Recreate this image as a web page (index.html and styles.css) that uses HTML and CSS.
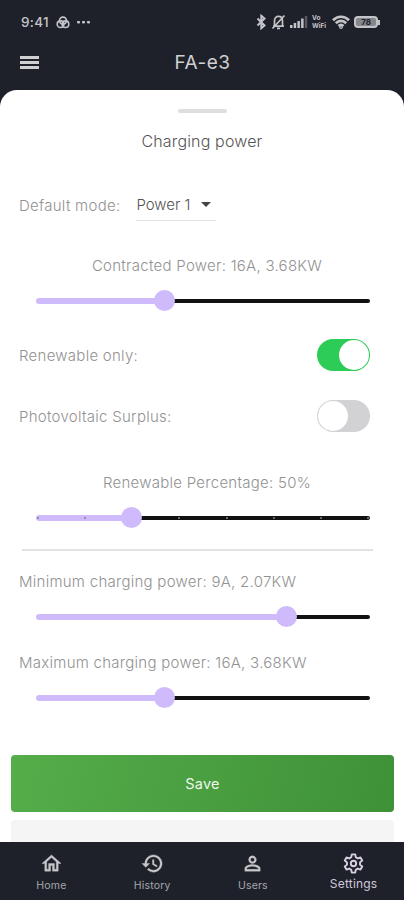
FILE: index.html
```html
<!DOCTYPE html>
<html lang="en">
<head>
  <meta charset="UTF-8" />
  <meta name="viewport" content="width=device-width, initial-scale=1.0" />
  <title>FA-e3</title>
  <link rel="stylesheet" href="styles.css">
</head>
<body>

  <div class="app">
    <div class="status-bar">
      <div class="status-left">
        <span class="time">9:41</span>
        <svg width="14" height="13" viewBox="0 0 14 13" fill="none" stroke="currentColor" stroke-width="1.6">
          <circle cx="7" cy="4.6" r="3.5" />
          <circle cx="4.5" cy="8.2" r="3.3" />
          <circle cx="9.5" cy="8.2" r="3.3" />
        </svg>
        <svg width="13" height="3" viewBox="0 0 13 3" fill="currentColor">
          <rect width="3" height="2.4" rx="0.8" />
          <rect x="5" width="3" height="2.4" rx="0.8" />
          <rect x="10" width="3" height="2.4" rx="0.8" />
        </svg>
      </div>
      <div class="status-right">
        <svg width="11" height="16" viewBox="0 0 11 16" fill="none" stroke="currentColor" stroke-width="2">
          <path d="M1.500 4.500l7 7L5.300 14.200V1.800l3.200 2.700-7 7" />
        </svg>
        <svg width="15" height="16" viewBox="0 0 15 16" fill="none" stroke="currentColor" stroke-width="1.7">
          <path d="M2 12.200h11M3.500 12V7c0-3 1.800-4.600 4-4.600s4 1.600 4 4.600v5M6 14.300h3M1.500 14.500L13.500 1.500" />
        </svg>
        <svg width="18" height="14" viewBox="0 0 18 14" fill="currentColor">
          <rect x="0" y="10" width="2.500" height="3" />
          <rect x="3.700" y="8" width="2.500" height="5" />
          <rect x="7.400" y="6" width="2.500" height="7" />
          <rect x="11.100" y="3.500" width="2.500" height="9.500" />
          <rect x="14.800" y="1" width="2.500" height="12" opacity="0.35" />
        </svg>
        <span class="vowifi"><span>Vo</span><span>WiFi</span></span>
        <svg width="18" height="14" viewBox="0 0 18 14" fill="none" stroke="currentColor" stroke-width="2.700">
          <path d="M1 5.200c4.500-4.600 11.500-4.600 16 0M3.800 8.200c3-3 7.400-3 10.400 0M6.500 11c1.500-1.400 3.500-1.400 5 0" />
          <circle cx="9" cy="12" r="0.600" />
        </svg>
        <span class="battery"><span class="battery-level">78</span></span>
      </div>
    </div>

    <header class="app-bar">
      <button class="menu" aria-label="Menu">
        <span></span>
        <span></span>
        <span></span>
      </button>
      <h1>FA-e3</h1>
    </header>

    <main class="sheet">
      <div class="handle"></div>
      <h2>Charging power</h2>

      <div class="mode-row">
        <span>Default mode:</span>
        <div class="select">
          <span>Power 1</span>
          <span class="arrow"></span>
        </div>
      </div>

      <p class="label center">Contracted Power: 16A, 3.68KW</p>
      <div class="slider">
        <div class="fill" style="width: 38.4%"></div>
        <div class="thumb"></div>
        <div class="rest"></div>
      </div>

      <div class="switch-row first">
        <span>Renewable only:</span>
        <div class="switch on"><div class="knob"></div></div>
      </div>
      <div class="switch-row">
        <span>Photovoltaic Surplus:</span>
        <div class="switch"><div class="knob"></div></div>
      </div>

      <p class="label center percentage">Renewable Percentage: 50%</p>
      <div class="slider">
        <div class="fill" style="width: 28.5%"></div>
        <div class="thumb"></div>
        <div class="rest"></div>
        <div class="ticks"><i></i><i></i><i class="hidden"></i><i></i><i></i><i></i><i></i><i></i></div>
      </div>

      <div class="divider"></div>

      <p class="label">Minimum charging power: 9A, 2.07KW</p>
      <div class="slider">
        <div class="fill" style="width: 75%"></div>
        <div class="thumb"></div>
        <div class="rest"></div>
      </div>

      <p class="label maximum">Maximum charging power: 16A, 3.68KW</p>
      <div class="slider">
        <div class="fill" style="width: 38.4%"></div>
        <div class="thumb"></div>
        <div class="rest"></div>
      </div>

      <button class="save">Save</button>
      <div class="next-card"></div>
    </main>

    <nav class="tab-bar">
      <a class="tab">
        <svg viewBox="0 0 24 24"><path d="M12 5.690l5 4.500V18h-2v-6H9v6H7v-7.810l5-4.500M12 3L2 12h3v8h6v-6h2v6h6v-8h3L12 3z" /></svg>
        <span>Home</span>
      </a>
      <a class="tab">
        <svg viewBox="0 0 24 24"><path d="M13 3c-4.970 0-9 4.030-9 9H1l3.890 3.890.07.14L9 12H6c0-3.870 3.130-7 7-7s7 3.130 7 7-3.130 7-7 7c-1.930 0-3.680-.79-4.940-2.060l-1.420 1.420C8.270 19.990 10.510 21 13 21c4.970 0 9-4.030 9-9s-4.030-9-9-9zm-1 5v5l4.280 2.540.72-1.210-3.500-2.080V8H12z" /></svg>
        <span>History</span>
      </a>
      <a class="tab">
        <svg viewBox="0 0 24 24"><path d="M12 5.900c1.160 0 2.100.94 2.100 2.100s-.94 2.100-2.100 2.100S9.900 9.160 9.900 8s.94-2.100 2.100-2.100m0 9c2.970 0 6.100 1.460 6.100 2.100v1.100H5.900V17c0-.64 3.130-2.100 6.100-2.100M12 4C9.790 4 8 5.790 8 8s1.790 4 4 4 4-1.790 4-4-1.790-4-4-4zm0 9c-2.670 0-8 1.340-8 4v3h16v-3c0-2.660-5.330-4-8-4z" /></svg>
        <span>Users</span>
      </a>
      <a class="tab active">
        <svg viewBox="0 0 24 24">
          <path d="M10.200 2.500h3.600l.6 3 2 1.200 2.900-1 1.800 3.100-2.300 2v2.400l2.300 2-1.800 3.100-2.900-1-2 1.200-.6 3h-3.600l-.6-3-2-1.200-2.900 1-1.800-3.100 2.300-2v-2.400l-2.300-2 1.800-3.100 2.900 1 2-1.200z" />
          <circle cx="12" cy="12" r="2.800" />
        </svg>
        <span>Settings</span>
      </a>
    </nav>
  </div>

</body>
</html>
```
FILE: styles.css
```css
* {
  box-sizing: border-box;
}

body {
  font-family: Inter, "Liberation Sans", sans-serif;
  margin: 0;
  background: #1e212a;
}

h1, h2, p {
  margin: 0;
  font-weight: 300;
}

button {
  font-family: inherit;
  border: none;
  cursor: pointer;
}

.app {
  height: 900px;
  display: flex;
  flex-direction: column;
  overflow: hidden;
}

/* Status bar */
.status-bar {
  height: 44px;
  padding: 0 24px 0 21px;
  display: flex;
  align-items: center;
  justify-content: space-between;
  color: #c3c4c7;
}

.status-left,
.status-right {
  display: flex;
  align-items: center;
}

.status-left {
  gap: 7px;
}

.status-right {
  gap: 4px;
}

.time {
  font-size: 13.5px;
  font-weight: 500;
  letter-spacing: 0.3px;
}

.vowifi {
  display: flex;
  flex-direction: column;
  width: 16px;
  font-size: 6.5px;
  line-height: 8px;
  font-weight: 700;
}

.battery {
  display: flex;
  align-items: center;
}

.battery::after {
  content: "";
  width: 2px;
  height: 5px;
  background: #c3c4c7;
}

.battery-level {
  width: 24px;
  height: 12px;
  border: 2px solid #c3c4c7;
  border-radius: 4px;
  background: #85878c;
  color: #1e212a;
  font-size: 8px;
  line-height: 8px;
  font-weight: 700;
  text-align: center;
}

/* App bar */
.app-bar {
  height: 46px;
  padding: 0 19px 10px 20px;
  display: grid;
  grid-template-columns: 20px 1fr 20px;
  align-items: center;
}

.menu {
  padding: 0;
  background: none;
  display: flex;
  flex-direction: column;
  gap: 2px;
}

.menu span {
  width: 19px;
  height: 3px;
  background: #d0d0d3;
}

.app-bar h1 {
  font-size: 19px;
  font-weight: 400;
  letter-spacing: 0.5px;
  text-align: center;
  color: #d0d0d3;
}

/* Sheet */
.sheet {
  height: 752px;
  display: flex;
  flex-direction: column;
  background: #fff;
  border-radius: 17px 17px 0 0;
  color: #929292;
  font-size: 15px;
  font-weight: 300;
  letter-spacing: 0.27px;
  overflow: hidden;
}

.handle {
  width: 49px;
  height: 4px;
  flex-shrink: 0;
  margin: 19px auto 0 178px;
  border-radius: 2px;
  background: #dedede;
}

.sheet h2 {
  margin-top: 18px;
  font-size: 16px;
  line-height: 20px;
  letter-spacing: 0.15px;
  text-align: center;
  color: #555;
}

.mode-row {
  height: 32px;
  margin: 38px 19px 0;
  display: flex;
  align-items: center;
  gap: 16px;
}

.select {
  width: 80px;
  height: 32px;
  display: flex;
  align-items: center;
  gap: 10px;
  border-bottom: 1px solid #e2e2e2;
  color: #555;
  letter-spacing: 0;
}

.arrow {
  border: 5px solid transparent;
  border-top-color: #444;
  border-bottom: none;
}

.label {
  margin: 21px 19px 0;
  line-height: 20px;
}

.center {
  margin: 35px 0 0 10px;
  text-align: center;
}

.percentage {
  margin-top: 41px;
}

/* Sliders */
.slider {
  position: relative;
  height: 22px;
  margin: 14px 34px 0 36px;
  display: flex;
  align-items: center;
}

.fill {
  height: 6px;
  border-radius: 3px 0 0 3px;
  background: #cfbbfc;
}

.thumb {
  width: 21px;
  height: 21px;
  margin: 0 -10.5px;
  border-radius: 50%;
  background: #cfbbfc;
  z-index: 1;
}

.rest {
  flex: 1;
  height: 4px;
  border-radius: 0 2px 2px 0;
  background: #111;
}

.ticks {
  position: absolute;
  left: 1px;
  right: 1px;
  display: flex;
  justify-content: space-between;
}

.ticks i {
  width: 2px;
  height: 2px;
  border-radius: 50%;
  background: #85808f;
}

.ticks .hidden {
  visibility: hidden;
}

/* Switches */
.switch-row {
  height: 32px;
  margin: 29px 34px 0 19px;
  display: flex;
  align-items: center;
  justify-content: space-between;
}

.first {
  margin-top: 28px;
}

.switch {
  width: 53px;
  height: 32px;
  padding: 1px;
  display: flex;
  border-radius: 16px;
  background: #d2d2d4;
}

.knob {
  width: 30px;
  height: 30px;
  border-radius: 50%;
  background: #fff;
}

.switch.on {
  justify-content: flex-end;
  background: #2dcc57;
}

.divider {
  height: 2px;
  flex-shrink: 0;
  margin: 21px 31px 0 22px;
  background: #e2e2e2;
}

.maximum {
  margin-top: 26px;
}

.save {
  height: 57px;
  flex-shrink: 0;
  margin: 47px 10px 0 11px;
  border-radius: 4px;
  background: linear-gradient(105deg, #55ad4a, #3f9137);
  color: #edf6ec;
  font-size: 14.5px;
  letter-spacing: 0.2px;
}

.next-card {
  height: 40px;
  flex-shrink: 0;
  margin: 8px 10px 0 11px;
  border-radius: 4px;
  background: #f5f5f5;
}

/* Bottom navigation */
.tab-bar {
  height: 58px;
  padding-left: 1px;
  display: grid;
  grid-template-columns: repeat(4, 1fr);
  background: #1e212a;
}

.tab {
  padding-top: 10px;
  display: flex;
  flex-direction: column;
  align-items: center;
  gap: 5px;
  color: #a6a7ab;
  font-size: 10.5px;
  line-height: 14px;
  letter-spacing: 0.2px;
}

.tab svg {
  width: 23px;
  height: 23px;
  margin-bottom: -1px;
  fill: #c8c8cc;
  stroke: #c8c8cc;
  stroke-width: 0.4;
}

.tab.active {
  color: #d0c8da;
  font-size: 12px;
  gap: 3px;
}

.tab.active svg {
  fill: none;
  stroke: #d8cfe2;
  stroke-width: 2;
  stroke-linejoin: round;
}
```
